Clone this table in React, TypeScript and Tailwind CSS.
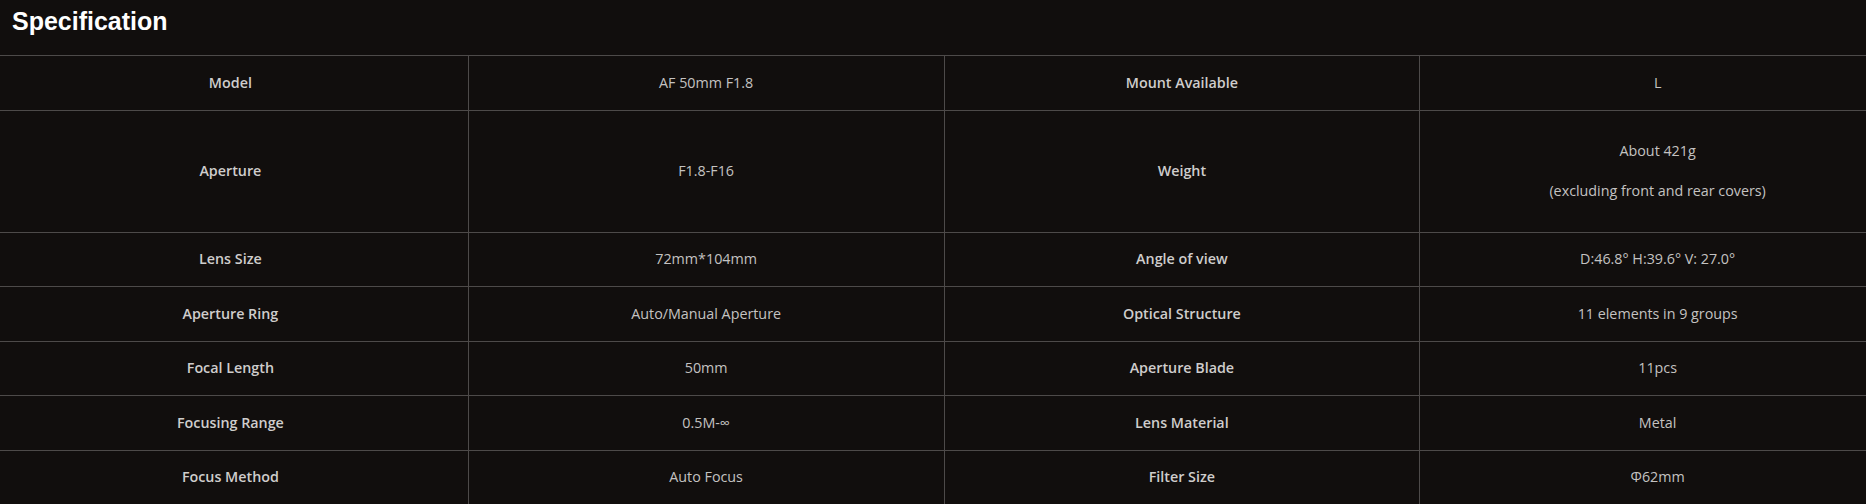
const specs: { label: string; value: string[]; label2: string; value2: string[] }[] = [
  { label: 'Model', value: ['AF 50mm F1.8'], label2: 'Mount Available', value2: ['L'] },
  {
    label: 'Aperture',
    value: ['F1.8-F16'],
    label2: 'Weight',
    value2: ['About 421g', '(excluding front and rear covers)'],
  },
  { label: 'Lens Size', value: ['72mm*104mm'], label2: 'Angle of view', value2: ['D:46.8° H:39.6° V: 27.0°'] },
  { label: 'Aperture Ring', value: ['Auto/Manual Aperture'], label2: 'Optical Structure', value2: ['11 elements in 9 groups'] },
  { label: 'Focal Length', value: ['50mm'], label2: 'Aperture Blade', value2: ['11pcs'] },
  { label: 'Focusing Range', value: ['0.5M-∞'], label2: 'Lens Material', value2: ['Metal'] },
  { label: 'Focus Method', value: ['Auto Focus'], label2: 'Filter Size', value2: ['Φ62mm'] },
]

function Cell({ lines, bold }: { lines: string[]; bold?: boolean }) {
  return (
    <div className="flex flex-col items-center justify-center border-r border-b border-[#4d4a49] px-4 pt-[16.5px] pb-[18px] text-center">
      {lines.length > 1 ? (
        <div className="flex flex-col gap-[21px] pt-[14px] pb-[13.5px]">
          {lines.map((l) => (
            <p key={l} className="leading-[19px] text-[#c4c2c1]">
              {l}
            </p>
          ))}
        </div>
      ) : (
        <p
          className={
            bold
              ? 'leading-[19px] font-semibold text-[#cfcdcc]'
              : 'leading-[19px] text-[#c4c2c1]'
          }
        >
          {lines[0]}
        </p>
      )}
    </div>
  )
}

export default function App() {
  return (
    <div className="h-[504px] w-full overflow-hidden bg-[#110e0d] font-['Open_Sans',sans-serif]">
      <h2 className="px-3 pt-[6px] pb-px font-['Liberation_Sans',Arial,sans-serif] text-[25px] leading-[30px] font-bold text-white">
        Specification
      </h2>

      <div className="mt-[18px] -ml-2 grid w-[1904px] grid-cols-4 border-t border-l border-[#4d4a49] text-[14.3px]">
        {specs.map((row) => (
          <div key={row.label} className="contents">
            <Cell lines={[row.label]} bold />
            <Cell lines={row.value} />
            <Cell lines={[row.label2]} bold />
            <Cell lines={row.value2} />
          </div>
        ))}
      </div>
    </div>
  )
}
